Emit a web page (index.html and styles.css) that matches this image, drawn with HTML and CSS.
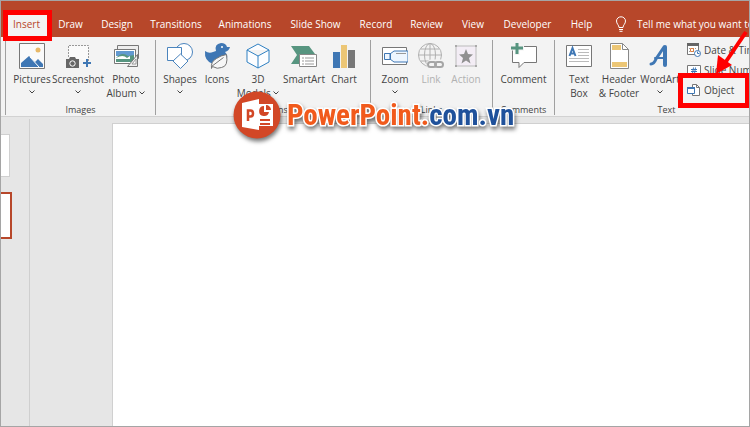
FILE: index.html
```
<!DOCTYPE html>
<html lang="en">
<head>
<meta charset="UTF-8">
<meta name="viewport" content="width=device-width, initial-scale=1.0">
<title>PowerPoint - Insert Object</title>
<link rel="stylesheet" href="styles.css">
</head>
<body>

<div class="app">
    <nav class="tabs">
        <button class="tab active">Insert<span class="mark mark-tab"></span></button>
        <button class="tab">Draw</button>
        <button class="tab">Design</button>
        <button class="tab">Transitions</button>
        <button class="tab">Animations</button>
        <button class="tab">Slide Show</button>
        <button class="tab">Record</button>
        <button class="tab">Review</button>
        <button class="tab">View</button>
        <button class="tab">Developer</button>
        <button class="tab">Help</button>
        <button class="tab tell-me">
            <svg width="12" height="16" viewBox="0 0 12 16" fill="none" stroke="#fff"><path d="M4 11.5C4 9 1.5 8 1.5 5a4.5 4.2 0 0 1 9 0C10.500 8 8 9 8 11.500zM4 13.500h4M4.500 15.300h3"/></svg>
            Tell me what you want to
        </button>
    </nav>

    <div class="ribbon">
        <section class="group images">
            <div class="commands">
                <button class="command">
                    <svg viewBox="0 0 26 26"><path d="M.5.500h25v25H.5z" fill="#fafafa" stroke="#777"/><circle cx="19" cy="7" r="2.500" fill="#e8b968"/><path d="M2 24v-4l8-7 6 6 3-3 5 5v3z" fill="#3f77b4"/><path d="m11 14 9 10" stroke="#fff"/></svg>
                    <span>Pictures</span>
                    <svg class="chevron" viewBox="0 0 6 4"><path d="m.5.500 2.500 2.500L5.500.500"/></svg>
                </button>
                <button class="command">
                    <svg viewBox="0 0 26 26"><path d="M3.500 14V2.500h20V18" fill="#fafafa" stroke="#999" stroke-dasharray="2 1"/><path d="M1 16h3l1-2h5l1 2h3v9H1z" fill="#666"/><circle cx="7.500" cy="20.500" r="2.700" fill="#666" stroke="#fff"/><path d="M22 16v8M18 20h8" stroke="#3f77b4" stroke-width="2"/></svg>
                    <span>Screenshot</span>
                    <svg class="chevron" viewBox="0 0 6 4"><path d="m.5.500 2.500 2.500L5.500.500"/></svg>
                </button>
                <button class="command">
                    <svg viewBox="0 0 26 26"><path d="M4.500 2.500h21v13h-21z" fill="#eee" stroke="#777"/><path d="M1.500 6.500h21v14h-21z" fill="#fff" stroke="#777"/><path d="M3 8h18v5H3z" fill="#6299d0"/><path d="M3 15q6-7 12-2l6-1v7H3z" fill="#579580"/><path d="M3 15q7-4 11 0l3-2v3H3z" fill="#fff"/><path d="m14.500 23.500 10-12v12z" fill="#eee" stroke="#777"/><path d="m19 21 4-5v5z" fill="#fff" stroke="#999"/></svg>
                    <span>Photo<br>Album <svg class="chevron" viewBox="0 0 6 4"><path d="m.5.500 2.500 2.500L5.500.500"/></svg></span>
                </button>
            </div>
            <h2>Images</h2>
        </section>

        <section class="group illustrations">
            <div class="commands">
                <button class="command">
                    <svg viewBox="0 0 26 26" fill="#fff" stroke="#4b84bd"><circle cx="17" cy="9" r="8.500"/><path d="M.5 4.500h14v13H.5z"/><path d="m13.500 11 7.500 7-7.500 7.500L6 18z"/></svg>
                    <span>Shapes</span>
                    <svg class="chevron" viewBox="0 0 6 4"><path d="m.5.500 2.500 2.500L5.500.500"/></svg>
                </button>
                <button class="command">
                    <svg viewBox="0 0 26 26"><path d="M1 8q4 3 8 1l3-1q-2-7 5-8 5 0 6 4h3q-1 4-5 5 4 4 1 8-5 6-13 4Q0 18 1 8" fill="#3f77b4"/><circle cx="18" cy="4" r="1" fill="#fff"/><path d="M7.500 25.500q-1-7 5-10 4-3 10-4 2 12-5 13-4 2-9-1zm0-2 12-9" fill="#f7f7f7" stroke="#777"/></svg>
                    <span>Icons</span>
                </button>
                <button class="command">
                    <svg viewBox="0 0 26 26" fill="#fcfdff" stroke="#2f80c2"><path d="M13 1 24 7v12l-11 6-11-6V7zM2 7l11 6 11-6M13 13v12"/></svg>
                    <span>3D<br>Models <svg class="chevron" viewBox="0 0 6 4"><path d="m.5.500 2.500 2.500L5.500.500"/></svg></span>
                </button>
                <button class="command">
                    <svg viewBox="0 0 26 26"><path d="M0 3h18l6 8-6 10H0l6-9z" fill="#579580"/><path d="M8.500 11.500h17v12h-17z" fill="#fff" stroke="#888"/><path d="M11 15h2m1 0h9m-12 3h2m1 0h9m-12 3h2m1 0h9" stroke="#999"/></svg>
                    <span>SmartArt</span>
                </button>
                <button class="command">
                    <svg viewBox="0 0 26 26"><path d="M2 9h7v16H2z" fill="#3f77b4"/><path d="M10 2h6v23h-6z" fill="#ecc675"/><path d="M17 7h7v18h-7z" fill="#777"/></svg>
                    <span>Chart</span>
                </button>
            </div>
            <h2>Illustrations</h2>
        </section>

        <section class="group links">
            <div class="commands">
                <button class="command">
                    <svg viewBox="0 0 26 26"><path d="M.5 4.500h24v17H.5z" fill="#fff" stroke="#777"/><path d="M2.500 10.500h6v6h-6zM8 11l4-3h14v11H12l-4-3z" fill="#eef6ff" stroke="#3f77b4"/><path d="M14 10.500h10" stroke="#999"/></svg>
                    <span>Zoom</span>
                    <svg class="chevron" viewBox="0 0 6 4"><path d="m.5.500 2.500 2.500L5.500.500"/></svg>
                </button>
                <button class="command" disabled>
                    <svg viewBox="0 0 26 26" fill="none" stroke="#b0b0b0"><circle cx="12" cy="12" r="11.500"/><ellipse cx="12" cy="12" rx="5.500" ry="11.500"/><path d="M.5 12h23M3 6h18M3 18h9M12 .500v23"/><g stroke="#f3f3f3" stroke-width="5"><rect x="11" y="19" width="8" height="5" rx="2.500"/><rect x="17" y="19" width="8" height="5" rx="2.500"/></g><g stroke="#a5a5a5" stroke-width="2"><rect x="10" y="19" width="8" height="5" rx="2.500"/><rect x="17" y="19" width="8" height="5" rx="2.500"/></g></svg>
                    <span>Link</span>
                </button>
                <button class="command" disabled>
                    <svg viewBox="0 0 26 26"><path d="M3 3h20v20H3z" fill="#f3edf5" stroke="#bbb"/><path d="m13 6 2 5 5 .500-4 3.500 1.500 5.500L13 17.500 8.500 20.500 10 15l-4-3.500 5-.500z" fill="#909090"/><path d="M2 2h2v2H2zM22 2h2v2h-2zM2 22h2v2H2zM22 22h2v2h-2z" fill="#aaa"/></svg>
                    <span>Action</span>
                </button>
            </div>
            <h2>Links</h2>
        </section>

        <section class="group comments">
            <div class="commands">
                <button class="command">
                    <svg viewBox="0 0 26 26"><path d="M1.500 3.500h24v16H13l-5 5v-5H1.500z" fill="#fff" stroke="#777"/><path d="M6-1v13M0 5h13" stroke="#f3f3f3" stroke-width="5"/><path d="M6 0v11M0 5h12" stroke="#579580" stroke-width="3"/></svg>
                    <span>Comment</span>
                </button>
            </div>
            <h2>Comments</h2>
        </section>

        <section class="group text">
            <div class="commands">
                <button class="command">
                    <svg viewBox="0 0 26 26"><path d="M.5 2.500h25v21H.5z" fill="#fff" stroke="#777"/><path d="m3.500 13 3-8 3 8M4.500 10.500h4" fill="none" stroke="#3f77b4" stroke-width="2"/><path d="M12 6.500h11M12 9.500h11M12 12.500h11M3 15.500h20M3 18.500h20" stroke="#bbb"/></svg>
                    <span>Text<br>Box</span>
                </button>
                <button class="command">
                    <svg viewBox="0 0 26 26"><path d="M4.500.500h12l6 6v19h-18z" fill="#fff" stroke="#888"/><path d="M16.500.500v6h6" fill="none" stroke="#888"/><path d="M6 2h9v5H6zM6 19h15v5H6z" fill="#ecc675"/></svg>
                    <span>Header<br>&amp; Footer</span>
                </button>
                <button class="command">
                    <svg viewBox="0 0 26 26" fill="none" stroke="#3f77b4" stroke-linecap="round"><path d="M4 21q3 0 5-5L17 4" stroke-width="3"/><path d="m18 4 0 18" stroke-width="4"/><path d="M8 15h10" stroke-width="2"/></svg>
                    <span>WordArt</span>
                    <svg class="chevron" viewBox="0 0 6 4"><path d="m.5.500 2.500 2.500L5.500.500"/></svg>
                </button>
                <div class="list">
                    <button class="row">
                        <svg viewBox="0 0 14 14"><path d="M.5 1.500h11v10H.5z" fill="#fff" stroke="#777"/><path d="M0 0h12v3H0z" fill="#666"/><path d="M2 5.500h8M2 8.500h5" stroke="#999" stroke-dasharray="1 1"/><path d="M3.500 5.500h3v3h-3z" fill="none" stroke="#dc8042"/><circle cx="10.500" cy="10.500" r="3" fill="#fff" stroke="#3f77b4"/><path d="M10.500 8.500v2h2" fill="none" stroke="#3f77b4"/></svg>
                        Date &amp; Time
                    </button>
                    <button class="row">
                        <svg viewBox="0 0 14 14"><path d="M.5 2.500h13v10H.5z" fill="#fff" stroke="#777"/><path d="m6.500 4.500-1 6m3-6-1 6M4 6.500h6M4 8.500h6" stroke="#3f77b4"/></svg>
                        Slide Number
                    </button>
                    <button class="row">
                        <svg viewBox="0 0 14 14"><path d="M5.500 1.500h4l3 3v8h-7z" fill="#fff" stroke="#777"/><path d="M9.500 1.500v3h3" fill="none" stroke="#777"/><path d="M.5 4.500h7v6h-7z" fill="#fff" stroke="#3f77b4"/><path d="M0 5h8" stroke="#3f77b4" stroke-width="2"/></svg>
                        Object
                        <span class="mark mark-object"></span>
                        <svg class="arrow" viewBox="0 0 34 44"><path d="M31 2 10 33" stroke="#f00" stroke-width="4"/><path d="m1 44 2-19 14 10z" fill="#f00"/></svg>
                    </button>
                </div>
            </div>
            <h2>Text</h2>
        </section>
    </div>

    <main class="workspace">
        <aside class="thumbnails">
            <div class="thumb"></div>
            <div class="thumb selected"></div>
        </aside>
        <div class="canvas">
            <div class="slide"></div>
        </div>
    </main>

    <div class="watermark">
        <svg viewBox="0 0 48 48"><circle cx="24" cy="24" r="23.500" fill="#d24726"/><path d="M25 13h15v22H25z" fill="#fff"/><path d="M9 12 26 8v31L9 36z" fill="#fff"/><path d="M15 30V19.500h2.500a2.500 3 0 0 1 0 6H15" fill="none" stroke="#d24726" stroke-width="2.500"/><path d="M31 15a5 5 0 1 0 5 6h-5z" fill="#d24726"/><path d="M33 14v5h5a5 5 0 0 0-5-5M27 28h10v2H27zM27 32h10v2H27z" fill="#d24726"/></svg>
        <div class="brand">PowerPoint.<span>com.vn</span></div>
    </div>
</div>

</body>
</html>
```
FILE: styles.css
```
* {
    box-sizing: border-box;
}
body {
    margin: 0;
    font-family: "Open Sans", "Noto Sans", sans-serif;
    font-size: 10px;
    color: #444;
}
button {
    border: 0;
    padding: 0;
    background: none;
    font: inherit;
    color: inherit;
    white-space: nowrap;
}
.app {
    position: relative;
    display: flex;
    flex-direction: column;
    height: 100vh;
    border: 1px solid #a5a5a5;
    overflow: hidden;
}

/* Tabs */
.tabs {
    display: grid;
    grid-template-columns: 45px 43px 50px 68px 70px 71px 50px 51px 42px 67px 41px 1fr;
    padding: 10px 0 0 3px;
    background: #b7472a;
    color: #fff;
}
.tab {
    position: relative;
    height: 26px;
}
.tab.active {
    background: #f3f3f3;
    color: #b7472a;
}
.tell-me {
    display: flex;
    align-items: center;
    gap: 10px;
    padding-left: 13px;
}
.tell-me svg {
    flex: none;
}

/* Ribbon */
.ribbon {
    display: flex;
    height: 80px;
    padding: 3px 0 1px 4px;
    background: #f3f3f3;
    border-bottom: 1px solid #d2d2d2;
}
.group {
    display: flex;
    flex-direction: column;
    justify-content: space-between;
    flex: none;
    border-left: 1px solid #a0a0a0;
}
.group h2 {
    margin: 0;
    font-size: 9px;
    line-height: 10px;
    font-weight: normal;
    text-align: center;
}
.commands {
    display: grid;
}
.images {
    width: 150px;
}
.images .commands {
    grid-template-columns: 48px 44px 52px;
    padding-left: 2px;
}
.illustrations {
    width: 215px;
}
.illustrations .commands {
    grid-template-columns: 40px 34px 48px 44px 36px;
    padding-left: 4px;
}
.links {
    width: 122px;
}
.links .commands {
    grid-template-columns: 38px 34px 36px;
    padding-left: 5px;
}
.comments {
    width: 62px;
}
.text {
    width: 224px;
}
.text .commands {
    grid-template-columns: 40px 40px 42px 1fr;
    padding-left: 4px;
}
.command {
    display: flex;
    flex-direction: column;
    align-items: center;
    height: 60px;
    padding-top: 3px;
    line-height: 14px;
    text-align: center;
}
.command:disabled {
    color: #b1b1b1;
}
.command > svg {
    width: 26px;
    height: 26px;
    margin-bottom: 3px;
    flex: none;
}
.command .chevron {
    width: 6px;
    height: 4px;
    margin-top: 4px;
    fill: none;
    stroke: #444;
}
.command span .chevron {
    vertical-align: 2px;
    margin-top: 0;
}
.list {
    display: flex;
    flex-direction: column;
    padding-left: 6px;
}
.row {
    position: relative;
    display: flex;
    align-items: center;
    gap: 3px;
    height: 20px;
}
.row > svg {
    width: 14px;
    height: 14px;
    flex: none;
}

/* Red marks over the tab and the Object button */
.mark {
    position: absolute;
    z-index: 2;
    border: 5px solid #f00;
}
.mark-tab {
    inset: -1px -3px -4px -1px;
}
.mark-object {
    top: -7px;
    left: -9px;
    width: 72px;
    height: 35px;
}
.row .arrow {
    position: absolute;
    z-index: 2;
    left: 28px;
    top: -50px;
    width: 34px;
    height: 44px;
}

/* Slide area */
.workspace {
    display: flex;
    flex: 1;
    background: #e6e6e6;
}
.thumbnails {
    width: 29px;
    margin-top: 2px;
    padding-top: 15px;
    border-right: 1px solid #cfcfcf;
}
.thumb {
    width: 9px;
    height: 43px;
    background: #fff;
    border: 1px solid #d0d0d0;
    border-left: 0;
}
.thumb.selected {
    width: 11px;
    height: 47px;
    margin-top: 15px;
    border: 2px solid #b7472a;
    border-left: 0;
}
.canvas {
    display: flex;
    flex: 1;
    padding: 6px 0 0 82px;
}
.slide {
    flex: 1;
    background: #fff;
    border: 1px solid #d0d0d0;
    border-width: 1px 0 0 1px;
}

/* Site logo */
.watermark {
    position: absolute;
    top: 90px;
    left: 232px;
    display: flex;
    align-items: center;
    gap: 6px;
    filter: drop-shadow(1px 3px 2px #0008);
}
.watermark svg {
    width: 48px;
    height: 48px;
}
.brand {
    font-family: "Roboto Condensed", Roboto, "Liberation Sans", sans-serif;
    font-size: 29px;
    line-height: 34px;
    font-weight: bold;
    color: #f15a1c;
    -webkit-text-stroke: 3px #fff;
    paint-order: stroke fill;
}
.brand span {
    color: #1f519b;
}
```
